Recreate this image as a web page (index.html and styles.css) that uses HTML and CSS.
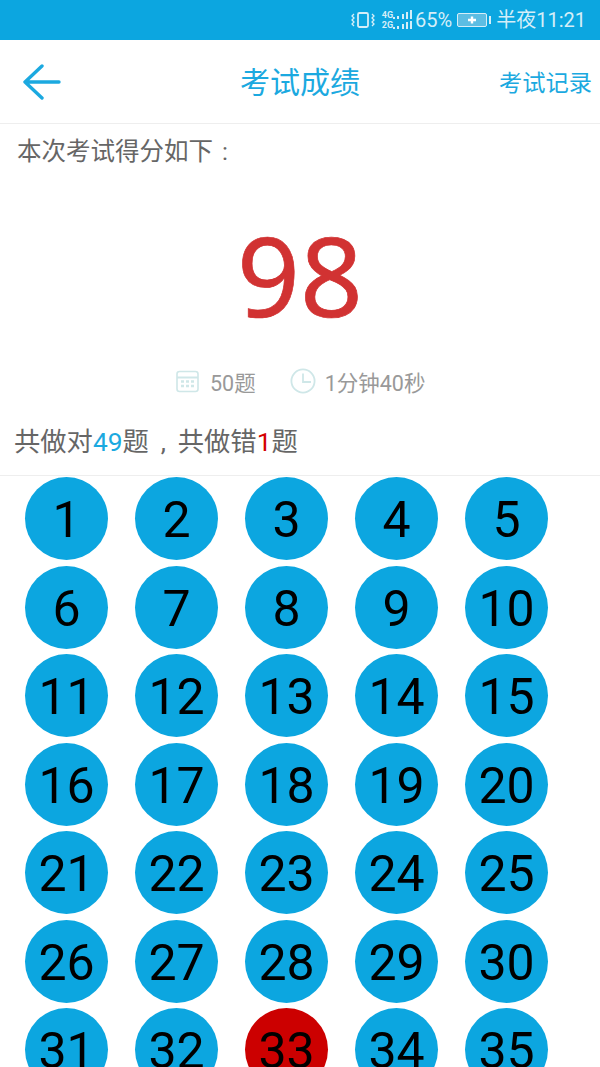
FILE: index.html
```html
<!DOCTYPE html>
<html lang="zh">
<head>
<meta charset="utf-8">
<title>考试成绩</title>
<link rel="stylesheet" href="styles.css">
</head>
<body>
<div class="statusbar">
  <svg class="st-vib" width="24" height="18" viewBox="0 0 24 18" fill="none" stroke="#d5eef8" stroke-width="1.3">
    <rect x="7" y="2" width="10" height="14" rx="1.5" stroke-width="1.8"/>
    <path d="M3 3l-2 2 2 2-2 2 2 2-2 2 2 2M21 3l2 2-2 2 2 2-2 2 2 2-2 2"/>
  </svg>
  <span class="st-net"><span>4G</span><span>2G</span></span>
  <svg class="st-sig" width="20" height="20" viewBox="0 0 20 20" fill="#d5eef8">
    <rect x="0" y="7" width="2" height="2"/><rect x="4" y="6" width="2" height="3"/><rect x="9" y="4" width="2" height="5"/><rect x="13" y="2" width="2" height="7"/><rect x="17" y="0" width="2" height="9"/>
    <rect x="0" y="17" width="2" height="2"/><rect x="4" y="16" width="2" height="3"/><rect x="9" y="14" width="2" height="5"/><rect x="13" y="12" width="2" height="7"/><rect x="17" y="11" width="2" height="8"/>
  </svg>
  <span class="st-text st-pct">65%</span>
  <svg class="st-bat" width="34" height="16" viewBox="0 0 34 16">
    <rect x="0.5" y="1.5" width="29" height="13" rx="1.5" fill="#5cbde3" stroke="#d5eef8"/>
    <path d="M11 8h8M15 4.5v7" stroke="#fff" stroke-width="2.4"/>
    <rect x="32" y="4" width="2" height="8" fill="#d5eef8"/>
  </svg>
  <span class="st-text st-time">半夜11:21</span>
</div>
<header class="topbar">
  <svg class="back" width="38" height="36" viewBox="0 0 38 36" fill="none" stroke="#1ba9e0" stroke-width="3.4" stroke-linecap="round" stroke-linejoin="round">
    <path d="M2 18H36M19 2L2 18L19 34"/>
  </svg>
  <h1 class="title">考试成绩</h1>
  <a class="record">考试记录</a>
</header>
<p class="intro">本次考试得分如下<span class="colon">:</span></p>
<div class="score">98</div>
<div class="meta">
  <svg class="meta-ico" width="23" height="23" viewBox="0 0 23 23" fill="none" stroke="#cfe7e8" stroke-width="1.6">
    <rect x="1" y="1.5" width="21" height="20" rx="2.5"/>
    <path d="M1 7.5h21" stroke-width="2"/>
    <path d="M5 11.5h3M10 11.5h3M15 11.5h3M5 16h3M10 16h3M15 16h3" stroke-width="2.4"/>
  </svg>
  <span class="meta-text count">50题</span>
  <svg class="meta-ico" width="26" height="26" viewBox="0 0 26 26" fill="none" stroke="#cfe7e8" stroke-width="1.8">
    <circle cx="13" cy="13" r="11.6"/>
    <path d="M13 5.5V14H21"/>
  </svg>
  <span class="meta-text time">1分钟40秒</span>
</div>
<p class="summary">共做对<span class="ok">49</span>题<span class="sep">,</span>共做错<span class="bad">1</span>题</p>
<div class="grid" id="grid">
  <div class="ball">1</div><div class="ball">2</div><div class="ball">3</div><div class="ball">4</div><div class="ball">5</div>
  <div class="ball">6</div><div class="ball">7</div><div class="ball">8</div><div class="ball">9</div><div class="ball">10</div>
  <div class="ball">11</div><div class="ball">12</div><div class="ball">13</div><div class="ball">14</div><div class="ball">15</div>
  <div class="ball">16</div><div class="ball">17</div><div class="ball">18</div><div class="ball">19</div><div class="ball">20</div>
  <div class="ball">21</div><div class="ball">22</div><div class="ball">23</div><div class="ball">24</div><div class="ball">25</div>
  <div class="ball">26</div><div class="ball">27</div><div class="ball">28</div><div class="ball">29</div><div class="ball">30</div>
  <div class="ball">31</div><div class="ball">32</div><div class="ball wrong">33</div><div class="ball">34</div><div class="ball">35</div>
</div>
</body>
</html>
```
FILE: styles.css
```css
* { box-sizing: border-box; }
html, body { margin: 0; padding: 0; }
body {
  width: 600px;
  height: 1067px;
  overflow: hidden;
  background: #fff;
  font-family: Roboto, "Noto Sans CJK SC", sans-serif;
}
.statusbar {
  height: 40px;
  background: #0ca6e0;
  display: flex;
  align-items: center;
  justify-content: flex-end;
  padding-right: 14px;
  color: #d5eef8;
}
.st-vib { margin-right: 7px; }
.st-net {
  display: flex;
  flex-direction: column;
  font-size: 9px;
  font-weight: 700;
  line-height: 10px;
}
.st-sig { margin-right: 2px; }
.st-text { font-size: 20px; line-height: 40px; }
.st-pct { margin-right: 5px; }
.st-bat { margin-right: 5px; }
.topbar {
  height: 84px;
  display: grid;
  grid-template-columns: 1fr auto 1fr;
  align-items: center;
  border-bottom: 1px solid #eeeeee;
  padding: 0 8px;
}
.back { display: block; margin-left: 15px; }
.title {
  margin: 0;
  padding-bottom: 3px;
  font-size: 30px;
  font-weight: 400;
  color: #1ba9e0;
}
.record {
  justify-self: end;
  padding-bottom: 2px;
  font-size: 23.25px;
  color: #1ba9e0;
}
.intro {
  margin: 0;
  padding: 12px 0 0 17px;
  height: 68px;
  font-size: 24.5px;
  line-height: 32px;
  color: #666;
}
.colon { margin-left: 9px; }
.score {
  height: 159px;
  text-align: center;
  font-family: "Noto Sans", sans-serif;
  font-size: 110px;
  font-weight: 400;
  -webkit-text-stroke: 0.7px #d13232;
  line-height: 165px;
  color: #d13232;
}
.meta {
  height: 60px;
  margin-bottom: 11px;
  padding-left: 176px;
  display: flex;
  align-items: center;
  color: #999;
  font-size: 21.5px;
}
.meta-text { margin-left: 11px; }
.count { margin-right: 34px; }
.time { margin-left: 9px; }
.summary {
  margin: 0;
  height: 54px;
  padding: 0 0 0 14px;
  border-bottom: 1px solid #eeeeee;
  font-size: 26.3px;
  line-height: 40px;
  color: #666;
}
.ok { color: #1ba9e0; }
.bad { color: #d40000; }
.sep {
  display: inline-block;
  width: 29px;
  text-align: center;
}
.grid {
  display: grid;
  grid-template-columns: repeat(5, 83px);
  column-gap: 27px;
  row-gap: 5.5px;
  padding: 1px 0 0 25px;
}
.ball {
  width: 83px;
  height: 83px;
  padding-top: 3px;
  border-radius: 50%;
  background: #0ca6e0;
  color: #000;
  font-size: 50px;
  display: flex;
  align-items: center;
  justify-content: center;
}
.wrong { background: #cc0000; }
```
